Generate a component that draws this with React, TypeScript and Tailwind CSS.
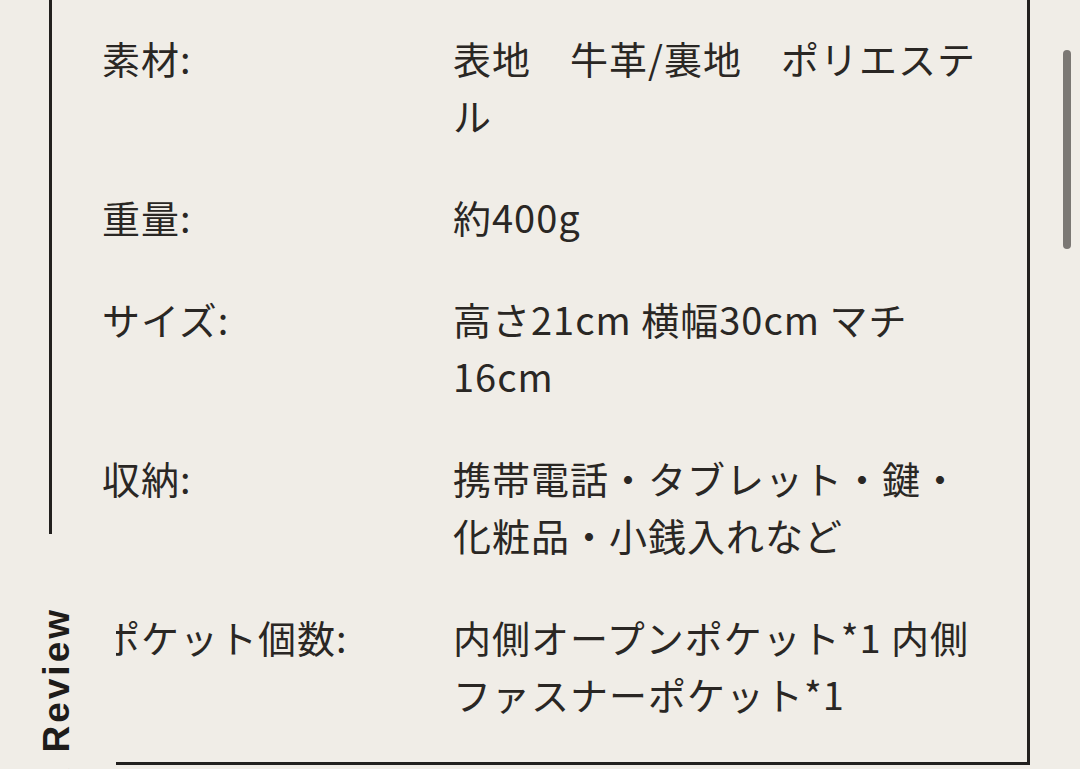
const specs = [
  { label: '素材:', value: '表地　牛革/裏地　ポリエステル' },
  { label: '重量:', value: '約400g' },
  { label: 'サイズ:', value: '高さ21cm 横幅30cm マチ 16cm' },
  { label: '収納:', value: '携帯電話・タブレット・鍵・化粧品・小銭入れなど' },
  { label: 'ポケット個数:', value: '内側オープンポケット*1 内側ファスナーポケット*1' },
]

export default function App() {
  return (
    <div className="relative h-[769px] w-[1080px] overflow-hidden bg-[#f0ede7] font-['Noto_Sans_CJK_JP',sans-serif] text-[#2a2724]">
      {/* spec table */}
      <div className="ml-[49px] w-[981px] border-x-[3px] border-b-[3px] border-[#22201e] pt-[29px] pb-[40px] pl-[50px]">
        <dl className="flex flex-col gap-[45px] text-[38px] leading-[57px] tracking-[1px]">
          {specs.map((s) => (
            <div key={s.label} className="grid grid-cols-[351px_530px]">
              <dt>{s.label}</dt>
              <dd>{s.value}</dd>
            </div>
          ))}
        </dl>
      </div>

      {/* side label */}
      <div className="absolute left-0 top-[534px] z-10 h-[260px] w-[116px] bg-[#f0ede7]">
        <span className="absolute left-[38px] top-[73px] rotate-180 whitespace-nowrap font-['Liberation_Sans',Arial,sans-serif] text-[37px] font-bold leading-[37px] tracking-[3px] text-[#1e1c1a] [writing-mode:vertical-rl]">
          Pick Review
        </span>
      </div>

      {/* scrollbar */}
      <div className="absolute left-[1063px] top-[50px] h-[199px] w-[8px] rounded-full bg-[#7b7874]" />
    </div>
  )
}
